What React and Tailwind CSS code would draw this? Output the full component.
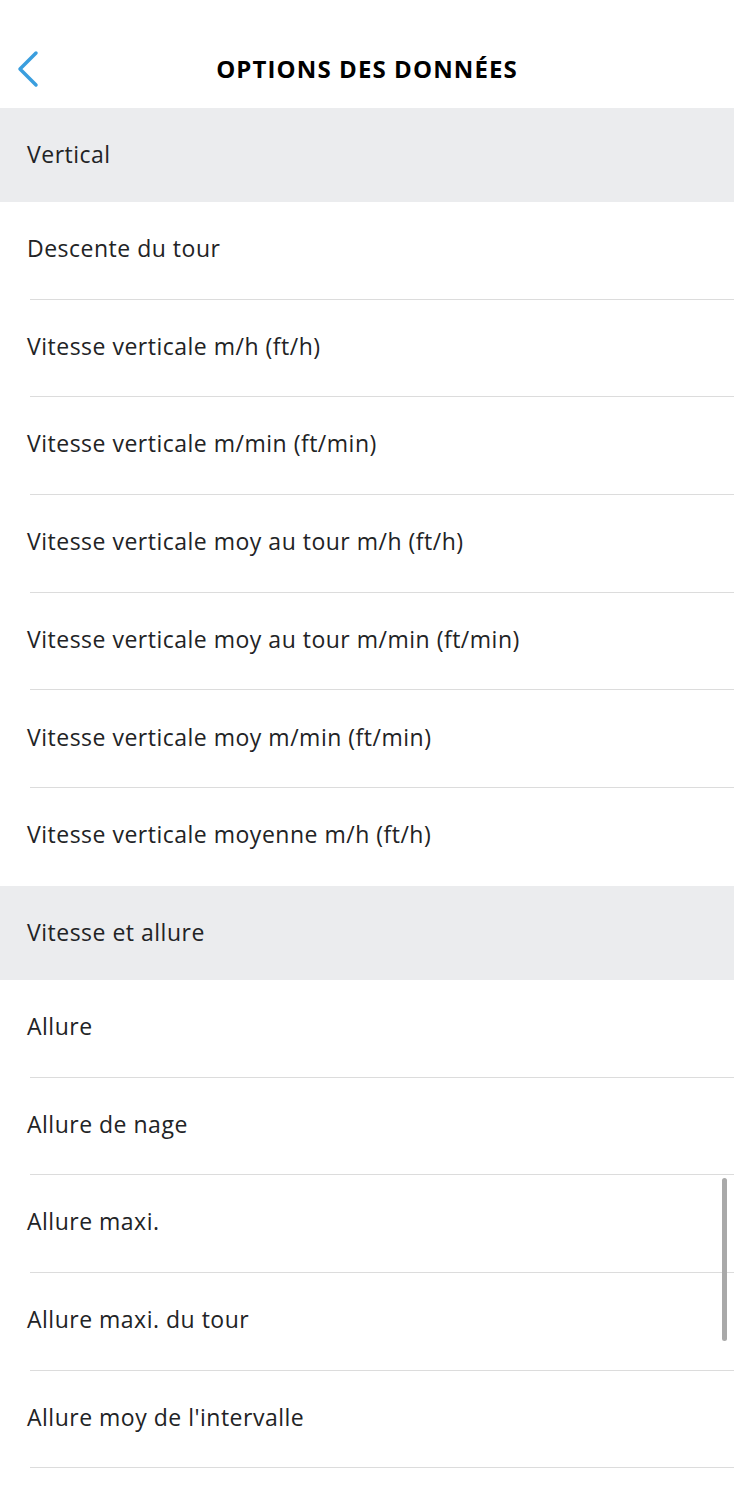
import { Fragment } from 'react';

const sections = [
  {
    title: 'Vertical',
    items: [
      'Descente du tour',
      'Vitesse verticale m/h (ft/h)',
      'Vitesse verticale m/min (ft/min)',
      'Vitesse verticale moy au tour m/h (ft/h)',
      'Vitesse verticale moy au tour m/min (ft/min)',
      'Vitesse verticale moy m/min (ft/min)',
      'Vitesse verticale moyenne m/h (ft/h)',
    ],
  },
  {
    title: 'Vitesse et allure',
    items: [
      'Allure',
      'Allure de nage',
      'Allure maxi.',
      'Allure maxi. du tour',
      "Allure moy de l'intervalle",
    ],
  },
];

export default function App() {
  return (
    <div className="relative w-[734px] h-[1500px] bg-white overflow-hidden text-[#222325]" style={{ fontFamily: '"Open Sans", Lato, sans-serif' }}>
      <div className="relative h-[108px] flex items-center justify-center">
        <button className="absolute left-[14px] top-[50px]">
          <svg width="28" height="38" viewBox="0 0 28 38" fill="none">
            <polyline points="22,3 6,19 22,35" stroke="#3a9ede" strokeWidth="3.5" strokeLinecap="round" strokeLinejoin="round" />
          </svg>
        </button>
        <h1 className="mt-[30px] text-[24px] font-bold tracking-[1.1px] text-black">OPTIONS DES DONNÉES</h1>
      </div>

      {sections.map((section, s) => (
        <Fragment key={section.title}>
          <div className="h-[94px] bg-[#ebecee] flex items-center pl-[27px] pb-[2px] text-[23px] tracking-[0.5px]">
            {section.title}
          </div>
          {section.items.map((item, i) => {
            const divider = i < section.items.length - 1 || s === sections.length - 1;
            return (
              <div key={item} className="relative h-[97.7px] flex items-center pl-[27px] pb-[5px] text-[23px] tracking-[0.5px]">
                {item}
                {divider && <div className="absolute left-[30px] right-0 bottom-0 h-px bg-[#dcdcdc]" />}
              </div>
            );
          })}
        </Fragment>
      ))}

      <div className="absolute left-[722px] top-[1178px] w-[5px] h-[163px] rounded-full bg-[#a9a9a9]" />
    </div>
  );
}
